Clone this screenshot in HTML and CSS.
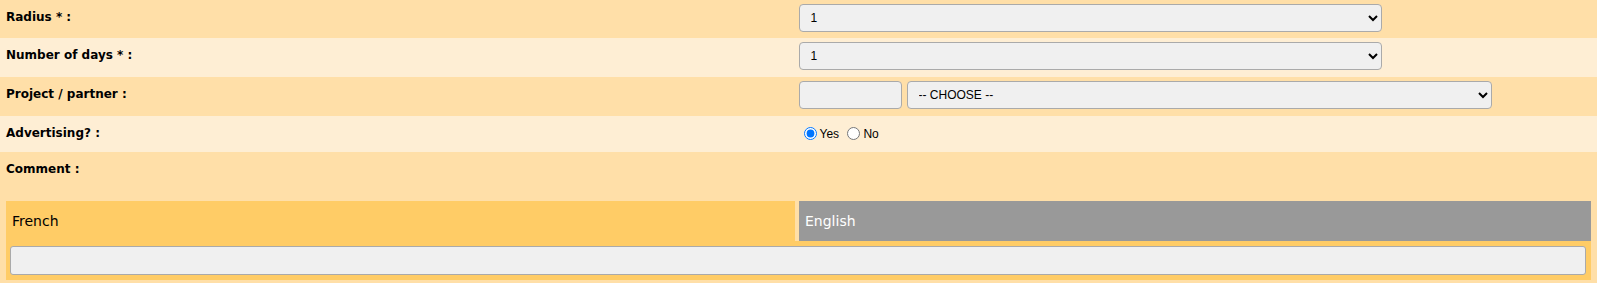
FILE: index.html
```html
<!DOCTYPE html>
<html lang="en">
<head>
    <meta charset="UTF-8">
    <meta name="viewport" content="width=device-width, initial-scale=1.0">
    <title>Ad request</title>
    <link rel="stylesheet" href="styles.css">
</head>
<body>
    <form class="form" id="adForm">
        <!-- Radius -->
        <div class="row dark">
            <div class="label">Radius * :</div>
            <div class="field">
                <select class="select" name="radius">
                    <option>1</option>
                    <option>2</option>
                    <option>5</option>
                </select>
            </div>
        </div>

        <!-- Days -->
        <div class="row light">
            <div class="label">Number of days * :</div>
            <div class="field">
                <select class="select" name="days">
                    <option>1</option>
                    <option>2</option>
                    <option>3</option>
                </select>
            </div>
        </div>

        <!-- Project -->
        <div class="row dark">
            <div class="label">Project / partner :</div>
            <div class="field inline">
                <input type="text" class="code" name="code">
                <select class="select partner" name="partner">
                    <option>-- CHOOSE --</option>
                </select>
            </div>
        </div>

        <!-- Advertising -->
        <div class="row light short">
            <div class="label">Advertising? :</div>
            <div class="field radios">
                <label><input type="radio" name="ads" value="yes" checked>Yes</label>
                <label><input type="radio" name="ads" value="no">No</label>
            </div>
        </div>

        <!-- Comment -->
        <div class="comment dark">
            <div class="label">Comment :</div>
            <div class="tabs">
                <div class="tab active">French</div>
                <div class="tab">English</div>
            </div>
            <div class="tab-panel">
                <textarea class="text" name="comment_fr"></textarea>
            </div>
        </div>
    </form>
</body>
</html>
```

FILE: styles.css
```css
/* Basic Reset */
* {
    box-sizing: border-box;
    margin: 0;
    padding: 0;
}

body {
    font-family: "DejaVu Sans", Verdana, sans-serif;
    color: #000;
    background-color: #ffdfa8;
}

.row {
    display: grid;
    grid-template-columns: 50% 50%;
    height: 39px;
}

.row:first-child {
    height: 38px;
}

.row.short {
    height: 36px;
}

.dark {
    background-color: #ffdfa8;
}

.light {
    background-color: #feeed4;
}

.label {
    font-size: 12px;
    font-weight: bold;
    padding: 10px 6px 0;
}

.field {
    padding-top: 4px;
}

.field.inline {
    display: flex;
    gap: 5px;
}

.select,
.code {
    font-family: "Liberation Sans", Arial, sans-serif;
    font-size: 12px;
    color: #000;
    height: 28px;
    width: 583px;
    padding: 0 7px;
    background-color: #f0f0f0;
    border: 1px solid #aaa;
    border-radius: 4px;
}

.code {
    width: 103px;
}

.select.partner {
    width: 585px;
}

/* Yes / No */
.radios {
    font-family: "Liberation Sans", Arial, sans-serif;
    font-size: 12px;
    padding-top: 8px;
}

.radios input {
    width: 13px;
    height: 13px;
    margin: 3px 3px 0 5px;
    vertical-align: -2px;
}

/* Comment with language tabs */
.comment {
    height: 131px;
    padding-bottom: 3px;
}

.comment .label {
    height: 49px;
}

.tabs {
    display: grid;
    grid-template-columns: 789fr 792fr;
    column-gap: 4px;
    margin: 0 6px;
}

.tab {
    font-size: 14px;
    height: 40px;
    line-height: 40px;
    padding: 0 6px;
    background-color: #999;
    color: #fff;
}

.tab.active {
    background-color: #ffcc66;
    color: #000;
    height: 41px;
}

.tab-panel {
    margin: -1px 6px 0;
    padding: 5px 5px 5px 4px;
    background-color: #ffcc66;
}

.text {
    display: block;
    width: 100%;
    height: 29px;
    background-color: #f0f0f0;
    border: 1px solid #aaa;
    border-radius: 3px;
    resize: none;
}
```
